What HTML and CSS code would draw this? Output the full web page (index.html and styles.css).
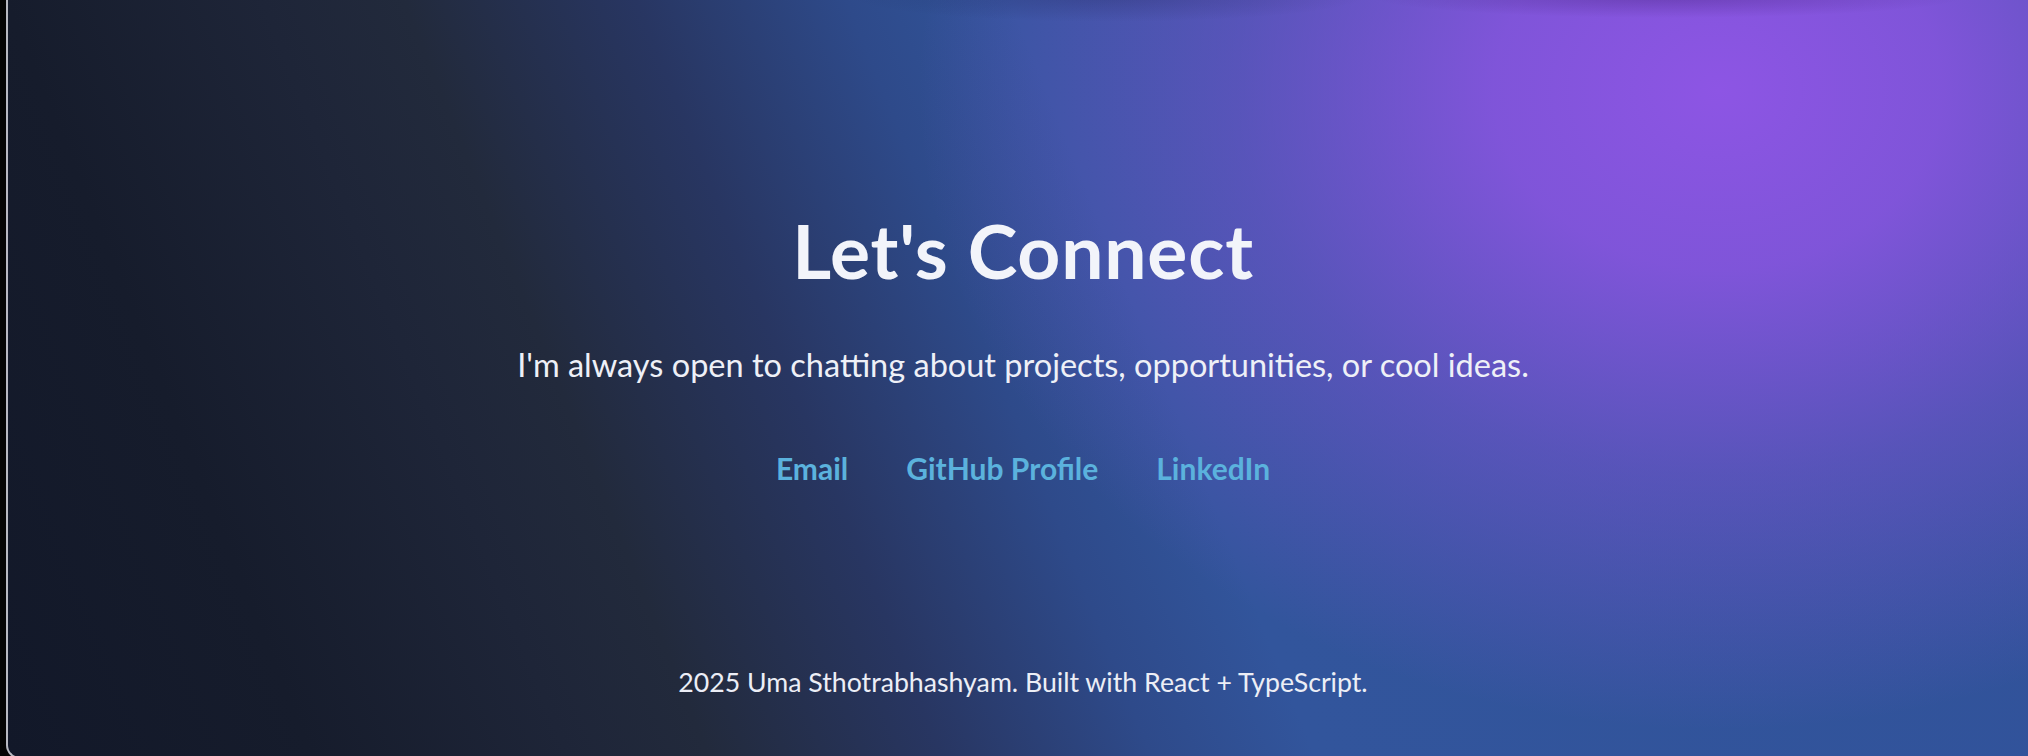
FILE: index.html
```html
<!DOCTYPE html>
<html lang="en">
<head>
<meta charset="utf-8">
<title>Let's Connect</title>
<link rel="stylesheet" href="styles.css">
</head>
<body>
  <section class="contact">
    <div class="contact-inner">
      <h2 class="contact-title">Let's Connect</h2>
      <p class="contact-lead">I'm always open to chatting about projects, opportunities, or cool ideas.</p>
      <nav class="contact-links">
        <a class="contact-link" href="#">Email</a>
        <a class="contact-link" href="#">GitHub Profile</a>
        <a class="contact-link" href="#">LinkedIn</a>
      </nav>
    </div>
    <footer class="contact-footer">2025 Uma Sthotrabhashyam. Built with React + TypeScript.</footer>
  </section>
</body>
</html>
```

FILE: styles.css
```css
html, body {
  margin: 0;
  padding: 0;
}

body {
  background: #050505;
  width: 2028px;
  height: 756px;
  overflow: hidden;
  font-family: "Lato", "Open Sans", sans-serif;
}

.contact {
  box-sizing: border-box;
  width: 2032px;
  height: 759px;
  margin-left: 6px;
  border-left: 2px solid #b8b9c2;
  border-bottom: 2px solid #b8b9c2;
  border-radius: 0 0 0 14px;
  display: flex;
  flex-direction: column;
  align-items: center;
  background:
    radial-gradient(ellipse 300px 22px at 1660px -4px, rgba(40, 10, 80, 0.28), rgba(40, 10, 80, 0)),
    radial-gradient(ellipse 260px 26px at 1100px -4px, rgba(20, 20, 60, 0.22), rgba(20, 20, 60, 0)),
    radial-gradient(ellipse 800px 640px at 1710px 90px, rgba(141, 85, 228, 1) 0%, rgba(141, 85, 228, 0.85) 28%, rgba(141, 85, 228, 0.42) 60%, rgba(141, 85, 228, 0) 100%),
    linear-gradient(68deg, #121829 0%, #161c2c 13%, #1e2538 24%, #222a3c 30%, #283662 40%, #2e4a8a 49%, #32559c 56%, #31529a 100%);
}

.contact-inner {
  display: flex;
  flex-direction: column;
  align-items: center;
  padding-top: 209px;
}

.contact-title {
  margin: 0;
  font-size: 75px;
  line-height: 1.1;
  font-weight: 700;
  color: #f2f4fa;
  letter-spacing: 0.8px;
}

.contact-lead {
  margin: 49px 0 0;
  font-size: 32.5px;
  line-height: 1.5;
  font-weight: 400;
  color: #eef0f7;
}

.contact-links {
  display: flex;
  gap: 58px;
  margin-top: 57px;
}

.contact-link {
  font-size: 30px;
  line-height: 1.5;
  font-weight: 700;
  color: #5bb2dd;
  text-decoration: none;
}

.contact-footer {
  margin-top: auto;
  margin-bottom: 55px;
  font-size: 26.7px;
  line-height: 1.5;
  color: #eceef6;
}
```
